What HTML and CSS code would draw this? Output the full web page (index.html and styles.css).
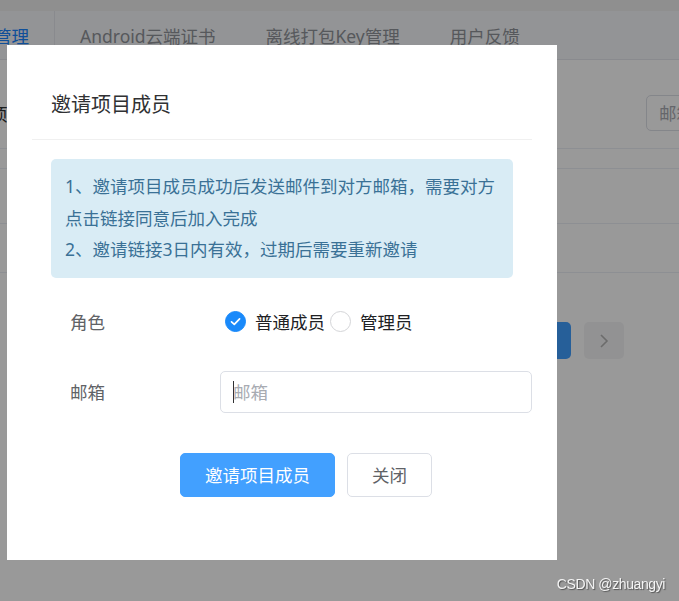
FILE: index.html
```html
<!DOCTYPE html>
<html lang="zh-CN">
<head>
<meta charset="utf-8">
<title>邀请项目成员</title>
<link rel="stylesheet" href="styles.css">
</head>
<body>
<div class="page">
  <div class="topstrip"></div>
  <div class="tabs">
    <div class="tab active">成员管理</div>
    <div class="tab">Android云端证书</div>
    <div class="tab">离线打包Key管理</div>
    <div class="tab">用户反馈</div>
  </div>
  <div class="content">
    <div class="toolbar">
      <span class="toolbar-label">项目成员</span>
      <div class="search">邮箱</div>
    </div>
    <div class="table">
      <div class="trow h1"></div>
      <div class="trow h2"></div>
      <div class="trow h3"></div>
      <div class="trow h4"></div>
    </div>
    <div class="pager">
      <span class="pg pg-active">1</span>
      <span class="pg pg-next"><svg width="12" height="16" viewBox="0 0 12 16"><path d="M3 2 L9 8 L3 14" fill="none" stroke="#b4b4b4" stroke-width="1.6"/></svg></span>
    </div>
  </div>
</div>

<div class="mask"></div>

<div class="dialog">
  <div class="dialog-header"><span class="dialog-title">邀请项目成员</span></div>
  <div class="dialog-body">
    <div class="alert">
      <p>1、邀请项目成员成功后发送邮件到对方邮箱，需要对方点击链接同意后加入完成</p>
      <p>2、邀请链接3日内有效，过期后需要重新邀请</p>
    </div>
    <div class="form-item first">
      <span class="form-label">角色</span>
      <div class="radios">
        <span class="radio checked">
          <span class="radio-icon"><svg width="13" height="13" viewBox="0 0 13 13"><path d="M2.5 6.8 L5.3 9.3 L10.6 3.8" fill="none" stroke="#ffffff" stroke-width="1.7" stroke-linecap="round" stroke-linejoin="round"/></svg></span>
          <span class="radio-label">普通成员</span>
        </span>
        <span class="radio">
          <span class="radio-icon"></span>
          <span class="radio-label">管理员</span>
        </span>
      </div>
    </div>
    <div class="form-item second">
      <span class="form-label">邮箱</span>
      <div class="input"><span class="caret"></span><span class="placeholder">邮箱</span></div>
    </div>
    <div class="footer">
      <button class="btn btn-primary">邀请项目成员</button>
      <button class="btn btn-default">关闭</button>
    </div>
  </div>
</div>

<div class="watermark">CSDN @zhuangyi</div>
</body>
</html>
```

FILE: styles.css
```css
* { box-sizing: border-box; }
html, body {
  margin: 0;
  padding: 0;
  width: 679px;
  height: 601px;
  overflow: hidden;
  background: #ffffff;
  font-family: "Noto Sans", "Noto Sans CJK SC", sans-serif;
}
p { margin: 0; }

.page {
  width: 679px;
  height: 601px;
  overflow: hidden;
  background: #ffffff;
}
.topstrip {
  height: 11px;
  background: #eeeeee;
}
.tabs {
  display: flex;
  height: 49px;
  background: #f5f7fa;
  border-bottom: 1px solid #e4e7ed;
  margin-left: -66px;
}
.tab {
  padding: 0 25px;
  line-height: 50px;
  font-size: 17.5px;
  color: #909399;
  white-space: nowrap;
}
.tab.active {
  color: #1a84ff;
  border-right: 1px solid #e4e7ed;
}

.content {
  padding-top: 35px;
}
.toolbar {
  display: flex;
  align-items: center;
  height: 36px;
}
.toolbar-label {
  margin-left: -10px;
  font-size: 17.5px;
  color: #303133;
}
.search {
  margin-left: auto;
  margin-right: -170px;
  width: 203px;
  height: 36px;
  border: 1px solid #dcdfe6;
  border-radius: 5px;
  padding-left: 12px;
  line-height: 34px;
  font-size: 17.5px;
  color: #a8abb2;
}
.table {
  margin-top: 17px;
}
.trow {
  border-top: 1px solid #ebeef5;
}
.trow.h1 { height: 20px; }
.trow.h2 { height: 55px; }
.trow.h3 { height: 49px; }
.trow.h4 { height: 1px; }

.pager {
  display: flex;
  justify-content: flex-end;
  gap: 13px;
  margin-top: 49px;
  padding-right: 55px;
}
.pg {
  width: 40px;
  height: 37px;
  border-radius: 5px;
  display: flex;
  align-items: center;
  justify-content: center;
  font-size: 16px;
}
.pg-active {
  background: #409eff;
  color: #ffffff;
}
.pg-next {
  background: #f4f4f5;
}

.mask {
  position: fixed;
  left: 0;
  top: 0;
  width: 679px;
  height: 601px;
  background: rgba(0, 0, 0, 0.4);
}

.dialog {
  position: fixed;
  left: 7px;
  top: 45px;
  width: 550px;
  height: 515px;
  background: #ffffff;
  padding: 0 25px;
}
.dialog-header {
  padding: 47px 0 21px 19px;
  border-bottom: 1px solid #f0f0f0;
}
.dialog-title {
  display: block;
  line-height: 26px;
  font-size: 20px;
  color: #303133;
}
.dialog-body {
  padding-top: 19px;
}
.alert {
  margin: 0 19px;
  padding: 12px 14px;
  background: #d9ecf5;
  border-radius: 5px;
  color: #3a7196;
  font-size: 17.5px;
  line-height: 31.5px;
}

.form-item {
  display: flex;
  align-items: center;
  height: 42px;
}
.form-item.first { margin-top: 23px; }
.form-item.second { margin-top: 28px; }
.form-label {
  width: 188px;
  padding-left: 38px;
  font-size: 17.5px;
  color: #606266;
  flex: none;
}
.radios {
  display: flex;
  align-items: center;
  margin-left: 5px;
}
.radio {
  display: flex;
  align-items: center;
  margin-right: 5px;
}
.radio-icon {
  width: 21px;
  height: 21px;
  border-radius: 50%;
  border: 1px solid #d4d5d8;
  display: flex;
  align-items: center;
  justify-content: center;
  flex: none;
}
.radio.checked .radio-icon {
  background: #1989fa;
  border-color: #1989fa;
}
.radio-label {
  margin-left: 9px;
  font-size: 17.5px;
  color: #202124;
}
.input {
  flex: 1;
  height: 42px;
  border: 1px solid #dcdfe6;
  border-radius: 5px;
  display: flex;
  align-items: center;
  padding-left: 12px;
}
.caret {
  width: 1px;
  height: 22px;
  background: #303133;
  margin-right: -1px;
}
.placeholder {
  font-size: 17.5px;
  color: #a8abb2;
}

.footer {
  display: flex;
  gap: 12px;
  margin-top: 40px;
  padding-left: 148px;
}
.btn {
  height: 44px;
  padding: 0 24px;
  border-radius: 5px;
  font-family: "Noto Sans", "Noto Sans CJK SC", sans-serif;
  font-size: 17.5px;
  border: 1px solid #dcdfe6;
  cursor: pointer;
}
.btn-primary {
  background: #42a0ff;
  border-color: #42a0ff;
  color: #ffffff;
}
.btn-default {
  background: #ffffff;
  color: #606266;
}

.watermark {
  position: fixed;
  right: 14px;
  bottom: 9px;
  font-family: "Liberation Sans", sans-serif;
  font-size: 14px;
  letter-spacing: -0.4px;
  color: #f4f4f4;
  text-shadow: 1px 1px 1px #555555;
}
```
